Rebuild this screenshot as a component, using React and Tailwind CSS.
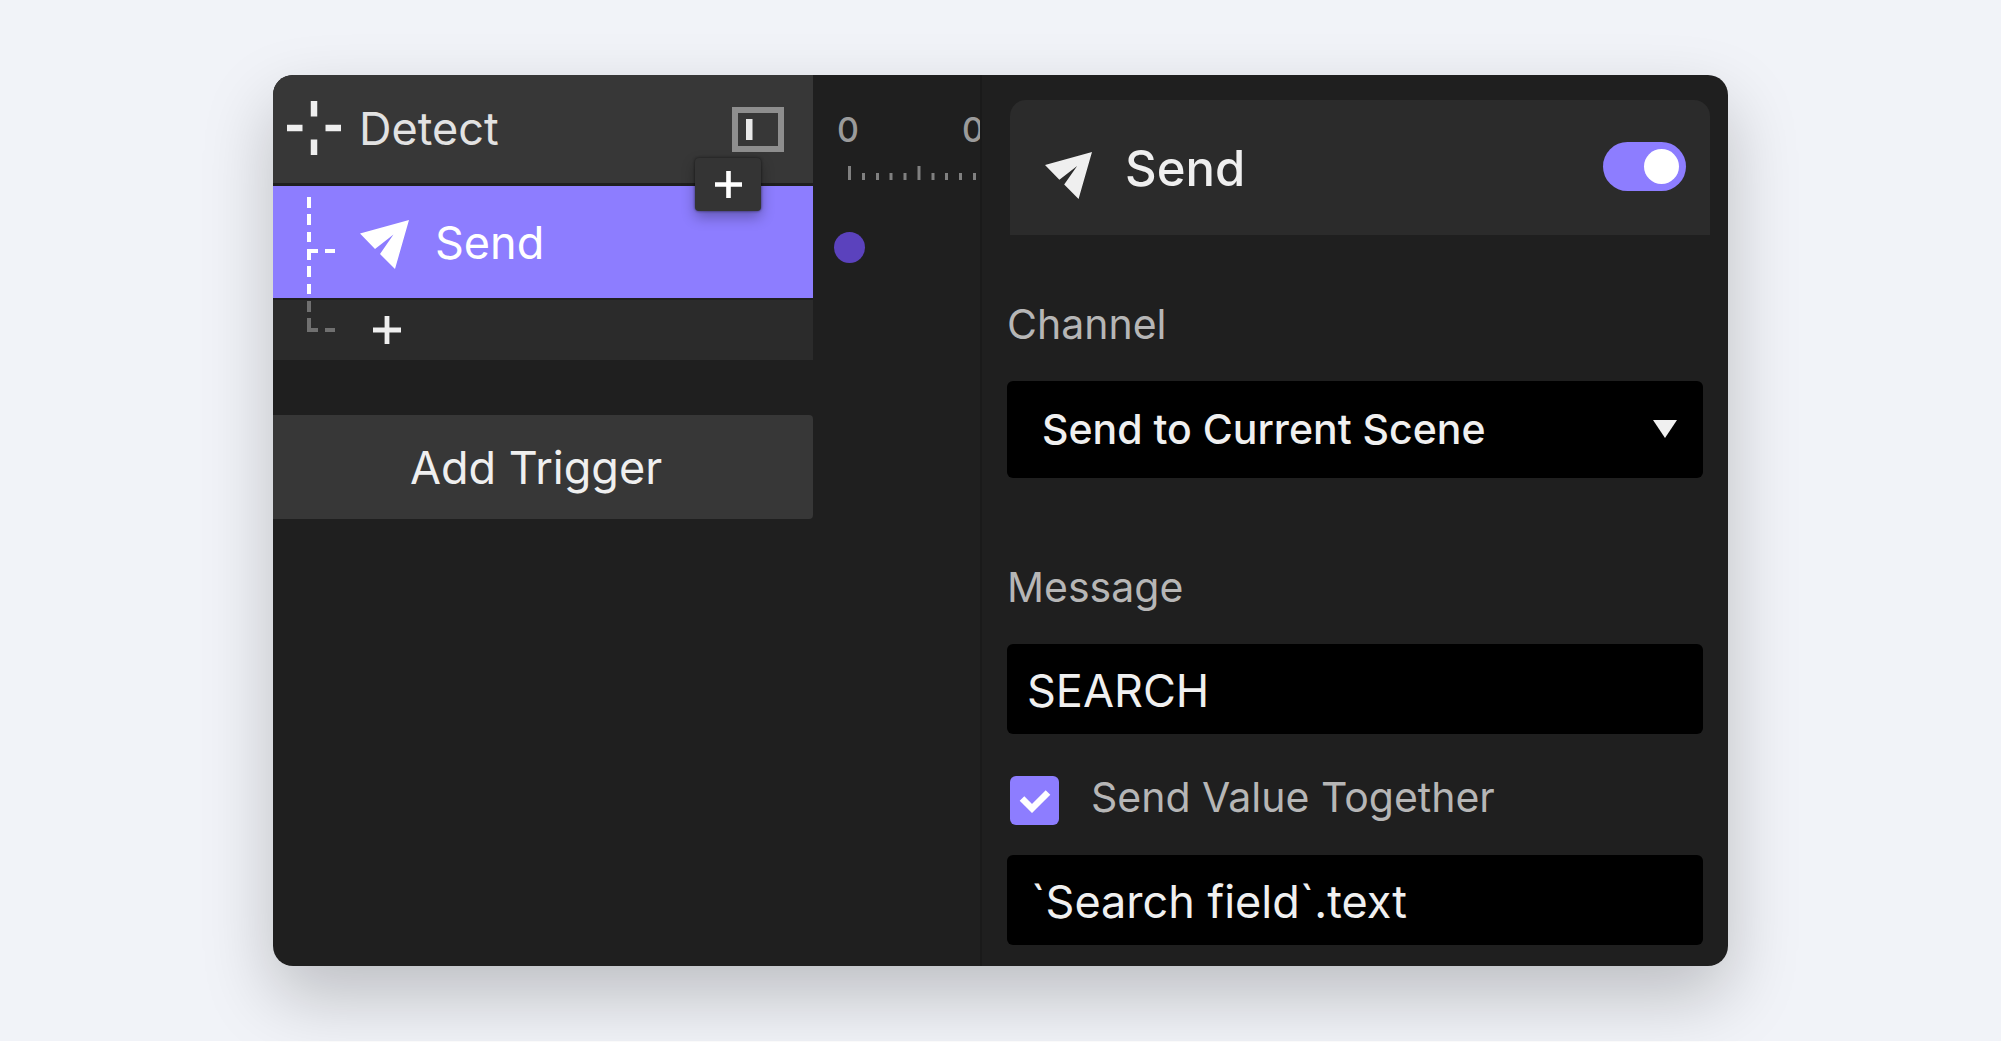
import { useState } from "react";

function Plane({ className }) {
  return (
    <svg aria-hidden="true" viewBox="0 0 49 49" className={className} fill="currentColor">
      <path d="M0 13.500 49 0 35 49 20 34 33.500 14.500 15 29Z" />
    </svg>
  );
}

function Plus({ className }) {
  return (
    <svg aria-hidden="true" viewBox="0 0 28 28" className={className} stroke="currentColor" strokeWidth="4.800">
      <path d="M14 0V28M0 14H28" />
    </svg>
  );
}

function Triggers() {
  return (
    <section aria-label="Triggers" className="min-w-0 text-[45px]">
      <div className="relative flex h-[108px] items-center bg-[#373737] pl-[14px] pr-[29px] text-[#e2e2e2]">
        <svg aria-hidden="true" viewBox="0 0 54 54" className="mb-0.5 size-[54px]" stroke="#efefef" strokeWidth="6.500">
          <path d="M27 0V15.500M27 38.500V54M0 27H15.500M38.500 27H54" />
        </svg>
        <h2 className="ml-[18px] grow">Detect</h2>
        <button type="button" aria-label="Toggle side panel">
          <svg aria-hidden="true" viewBox="0 0 52 45" className="h-[45px] w-[52px]">
            <path d="M3 3H49V42H3Z" fill="none" stroke="#8e8e8e" strokeWidth="6" />
            <path d="M14 12H20.500V33H14Z" fill="#e9e9e9" />
          </svg>
        </button>
        <button
          type="button"
          aria-label="Add response"
          className="absolute right-[52px] top-[83px] z-10 flex h-[53px] w-[66px] items-center justify-center rounded bg-[#343434] text-white shadow-[0_0_3px_rgba(0,0,0,0.6),0_6px_14px_rgba(0,0,0,0.3)]"
        >
          <Plus className="size-[27px]" />
        </button>
      </div>
      <div className="mt-[3px] flex h-[112px] items-center bg-[#8d7dff] text-white">
        <svg aria-hidden="true" viewBox="0 0 28 112" className="ml-[34px] h-[112px] w-7" fill="none" stroke="currentColor" strokeWidth="4">
          <path d="M2 11V22M2 28V39M2 46V56M2 63V74M2 80V91M2 98V108M2 65H11M18 65H28" />
        </svg>
        <Plane className="ml-[25px] mt-1 size-[49px]" />
        <span className="ml-[26px] mt-0.5">Send</span>
      </div>
      <div className="mt-0.5 flex h-[60px] items-center bg-[#2b2b2b] text-[#efefef]">
        <svg aria-hidden="true" viewBox="0 0 28 60" className="ml-[34px] h-[60px] w-7" fill="none" stroke="#707070" strokeWidth="4">
          <path d="M2 1V12M2 18V30H11M18 30H28" />
        </svg>
        <button type="button" aria-label="Add action" className="ml-[38px]">
          <Plus className="size-7" />
        </button>
      </div>
      <button type="button" className="mt-[55px] h-[104px] w-full rounded-r bg-[#373737] pr-3.5 pt-0.5 text-[#efefef]">
        Add Trigger
      </button>
    </section>
  );
}

function Timeline() {
  return (
    <section aria-label="Timeline" className="min-w-0 overflow-hidden border-r-2 border-[#1a1a1a] pl-[21px] text-[34px] font-medium leading-10 text-[#9b9b9b]">
      <div className="mt-[35px] flex w-[300px] pl-[3px]">
        <span className="w-[125px]">0</span>
        <span>0</span>
      </div>
      <svg aria-hidden="true" viewBox="0 0 146 14" className="mt-4 h-[14px] w-[146px]" stroke="#808080" strokeWidth="3">
        <path d="M15.500 0V14M29.500 7V14M43.500 7V14M57 7V14M71 7V14M85 0V14M99 7V14M112.500 7V14M126.500 7V14M140.500 7V14" />
      </svg>
      <div className="mt-[52px] size-[31px] rounded-full bg-[#5b42bd]" />
    </section>
  );
}

function Inspector() {
  const [message, setMessage] = useState("SEARCH");
  const [value, setValue] = useState("`Search field`.text");
  return (
    <section aria-label="Send settings" className="min-w-0 pb-[21px] pl-[25px] pr-[25px] pt-[25px] text-[41px] leading-[52px] text-[#b6b6b6]">
      <div className="-mr-[7px] ml-[3px] flex h-[135px] items-center rounded-t-2xl bg-[#2b2b2b] pl-[35px] pr-6 text-[#efefef]">
        <Plane className="mt-4 size-[47px]" />
        <h2 className="ml-[33px] mt-0.5 grow text-[49px] font-medium">Send</h2>
        <label className="relative mb-0.5 block h-[49px] w-[83px]">
          <input type="checkbox" role="switch" defaultChecked aria-label="Enable Send" className="peer block size-full appearance-none rounded-full bg-[#555] checked:bg-[#8d7dff]" />
          <span className="pointer-events-none absolute left-[7px] top-[7px] size-[35px] rounded-full bg-white peer-checked:left-[41px]" />
        </label>
      </div>
      <label htmlFor="channel" className="mt-[63px] block">Channel</label>
      <div className="relative mt-[31px]">
        <select id="channel" className="block h-[97px] w-full appearance-none rounded-md bg-black pb-0.5 pl-[35px] pr-16 font-medium text-[#f0f0f0]">
          <option>Send to Current Scene</option>
        </select>
        <svg aria-hidden="true" viewBox="0 0 24 18" className="pointer-events-none absolute right-[26px] top-[39px] h-[18px] w-6" fill="#f0f0f0">
          <path d="M0 0H24L12 18Z" />
        </svg>
      </div>
      <label htmlFor="message" className="mt-[83px] block">Message</label>
      <input
        id="message"
        type="text"
        value={message}
        onChange={(e) => setMessage(e.target.value)}
        className="mt-[31px] block h-[90px] w-full rounded-md bg-black px-5 pt-0.5 text-[45px] text-[#f0f0f0]"
      />
      <div className="mt-[34px] flex items-center pl-[3px]">
        <span className="relative mt-2 block size-[49px]">
          <input id="together" type="checkbox" defaultChecked className="peer block size-full appearance-none rounded-md bg-[#555] checked:bg-[#8d7dff]" />
          <svg aria-hidden="true" viewBox="0 0 49 49" className="pointer-events-none absolute inset-0 hidden size-full peer-checked:block" fill="none" stroke="#fff" strokeWidth="6.500">
            <path d="M12 22.500 22 32.500 38 16.500" />
          </svg>
        </span>
        <label htmlFor="together" className="ml-8">Send Value Together</label>
      </div>
      <input
        type="text"
        aria-label="Value"
        value={value}
        onChange={(e) => setValue(e.target.value)}
        className="mt-[30px] block h-[90px] w-full rounded-md bg-black px-6 pt-0.5 text-[45px] text-[#f0f0f0]"
      />
    </section>
  );
}

export default function App() {
  return (
    <main className="min-h-screen border-b border-white bg-[#f1f3f8] px-6 pb-[75px] pt-[75px] font-['Inter',sans-serif]">
      <div className="mx-auto max-w-[1455px] rounded-[20px] shadow-[0_30px_70px_rgba(0,0,0,0.22)]">
        <div className="grid grid-cols-[540px_169px_minmax(0,1fr)] overflow-hidden rounded-[20px] bg-[#1f1f1f]">
          <Triggers />
          <Timeline />
          <Inspector />
        </div>
      </div>
    </main>
  );
}
